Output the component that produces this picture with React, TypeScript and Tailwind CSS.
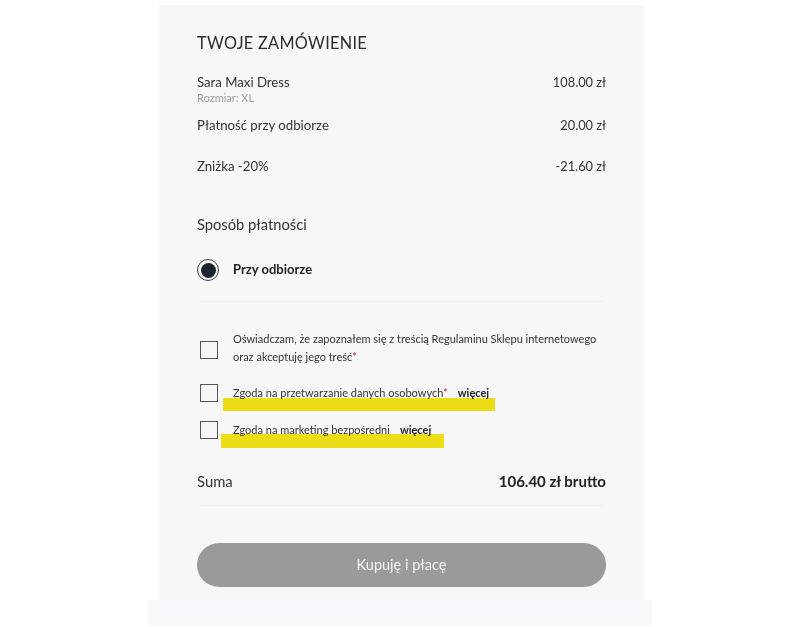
import React from "react";

type Line = { label: string; sub?: string; price: string; gap: string };

const lines: Line[] = [
  { label: "Sara Maxi Dress", sub: "Rozmiar: XL", price: "108.00 zł", gap: "mt-0" },
  { label: "Płatność przy odbiorze", price: "20.00 zł", gap: "mt-[12px]" },
  { label: "Zniżka -20%", price: "-21.60 zł", gap: "mt-[23px]" },
];

const Checkbox = () => (
  <span className="block w-[18px] h-[18px] shrink-0 border border-[#555] bg-[#f7f7f7]" />
);

const App = () => {
  return (
    <div
      className="w-[800px] h-[627px] bg-white overflow-hidden flex flex-col items-start"
      style={{ fontFamily: "Lato, 'Open Sans', sans-serif" }}
    >
      <div className="mt-[5px] ml-[159px] w-[485px] h-[595px] bg-[#f7f7f7] px-[38px] pt-[28px] text-[#333]">
        <h2 className="text-[16.3px] tracking-[0.3px] leading-[20px] text-[#2b2b2b]">
          TWOJE ZAMÓWIENIE
        </h2>

        {/* order lines */}
        <div className="mt-[20px]">
          {lines.map((l) => (
            <div key={l.label} className={`flex justify-between items-start ${l.gap}`}>
              <div>
                <div className="text-[13.2px] leading-[18px]">{l.label}</div>
                {l.sub && (
                  <div className="text-[11px] leading-[13px] text-[#a0a0a0]">{l.sub}</div>
                )}
              </div>
              <div className="text-[12.8px] leading-[18px]">{l.price}</div>
            </div>
          ))}
        </div>

        <div className="mt-[39px] text-[14.7px] leading-[20px]">Sposób płatności</div>

        <label className="mt-[25px] flex items-center">
          <span className="w-[22px] h-[22px] rounded-full border border-[#444] flex items-center justify-center">
            <span className="w-[15px] h-[15px] rounded-full bg-[#1d2431]" />
          </span>
          <span className="ml-[14px] text-[13px] font-bold text-[#222]">Przy odbiorze</span>
        </label>

        <div className="mt-[20px] mx-[3px] h-px bg-[#efefef]" />

        {/* consents */}
        <div className="mt-[31px] ml-[3px] flex items-center gap-[15px]">
          <Checkbox />
          <div className="text-[11px] leading-[18px] text-[#333] -mt-[3px]">
            Oświadczam, że zapoznałem się z treścią Regulaminu Sklepu internetowego
            <br />
            oraz akceptuję jego treść<span className="text-[#c0203a]">*</span>
          </div>
        </div>

        <div className="relative mt-[18px] ml-[3px] flex items-center gap-[15px]">
          <Checkbox />
          <div className="text-[11px] leading-[18px] text-[#333]">
            Zgoda na przetwarzanie danych osobowych<span className="text-[#c0203a]">*</span>
            <span className="ml-[10px] font-bold text-[#222]">więcej</span>
          </div>
          <span className="absolute left-[23px] top-[14px] w-[272px] h-[13px] bg-[#f5e516] mix-blend-multiply" />
        </div>

        <div className="relative mt-[19px] ml-[3px] flex items-center gap-[15px]">
          <Checkbox />
          <div className="text-[11px] leading-[18px] text-[#333]">
            Zgoda na marketing bezpośredni
            <span className="ml-[10px] font-bold text-[#222]">więcej</span>
          </div>
          <span className="absolute left-[21px] top-[13px] w-[223px] h-[14px] bg-[#f5e516] mix-blend-multiply" />
        </div>

        {/* total */}
        <div className="mt-[32px] flex justify-between items-center h-[20px]">
          <span className="text-[14.8px]">Suma</span>
          <span className="text-[15px] font-bold text-[#222]">106.40 zł brutto</span>
        </div>
        <div className="mt-[14px] mx-[3px] h-px bg-[#f0f0f0]" />

        <button className="mt-[37px] w-full h-[44px] rounded-full bg-[#9a9a9a] text-[14.5px] text-[#f4f4f4]">
          Kupuję i płacę
        </button>
      </div>
      <div className="ml-[147px] w-[505px] h-[25px] bg-[#f8f9fc]" />
    </div>
  );
};

export default App;
